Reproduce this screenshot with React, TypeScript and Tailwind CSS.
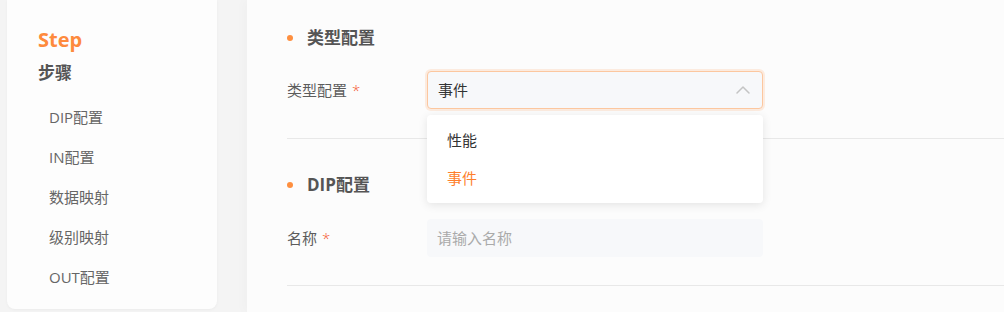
import { ChevronUp } from "lucide-react";

const steps = ["DIP配置", "IN配置", "数据映射", "级别映射", "OUT配置"];

const font = { fontFamily: '"Open Sans", "Noto Sans CJK SC", sans-serif' };

function SectionTitle({ title }: { title: string }) {
  return (
    <div className="flex h-6 items-center gap-[14px]">
      <span className="size-[6px] rounded-full bg-[#fe8f3f]" />
      <h2 className="text-[17px] font-bold text-[#555]">{title}</h2>
    </div>
  );
}

function Label({ text }: { text: string }) {
  return (
    <div className="flex w-[140px] shrink-0 items-center gap-[5px] text-[15px] text-[#5c5c5c]">
      <span>{text}</span>
      <span className="font-light text-[#f5582f]">*</span>
    </div>
  );
}

export default function App() {
  return (
    <div className="flex h-[312px] w-[1004px] overflow-hidden bg-[#f4f4f4]" style={font}>
      <aside className="ml-[7px] h-[309px] w-[210px] shrink-0 rounded-b-lg bg-[#fdfdfd] pl-[31px] pt-[26px] shadow-[0_1px_3px_rgba(0,0,0,0.04)]">
        <p className="text-[20px] font-bold leading-7 text-[#fe8a3d]">Step</p>
        <p className="mt-[7px] text-[17px] font-bold leading-6 text-[#555]">步骤</p>
        <ul className="mt-3 pl-[11px] text-[15px] text-[#666]">
          {steps.map((s) => (
            <li key={s} className="flex h-10 items-center">
              {s}
            </li>
          ))}
        </ul>
      </aside>

      <main className="ml-[30px] flex-1 bg-[#fcfcfc] pl-10 shadow-[-4px_0_10px_rgba(0,0,0,0.02)]">
        <section className="border-b border-[#e8e8e8] pb-[29px] pt-[26px]">
          <SectionTitle title="类型配置" />
          <div className="mt-[21px] flex items-center">
            <Label text="类型配置" />
            <div className="relative">
              <div className="flex h-[38px] w-[336px] items-center justify-between rounded border border-[#fcc79f] bg-[#f7f8fa] pl-[10px] pr-[7px] text-[15px] text-[#333] shadow-[0_0_0_2px_rgba(254,143,63,0.15)]">
                <span>事件</span>
                <ChevronUp className="size-6 text-[#c4c4c4]" strokeWidth={1.5} />
              </div>
              <ul className="absolute left-0 top-[44px] z-10 w-[336px] rounded bg-white py-[6px] text-[15px] shadow-[0_2px_10px_rgba(0,0,0,0.1)]">
                <li className="flex h-[38px] items-center pl-5 text-[#333]">性能</li>
                <li className="flex h-[38px] items-center pl-5 text-[#fe7f2d]">事件</li>
              </ul>
            </div>
          </div>
        </section>

        <section className="border-b border-[#e8e8e8] pb-[28px] pt-[34px]">
          <SectionTitle title="DIP配置" />
          <div className="mt-[22px] flex items-center">
            <Label text="名称" />
            <input
              placeholder="请输入名称"
              className="h-[38px] w-[336px] rounded bg-[#f7f8fa] pl-[10px] text-[15px] text-[#333] outline-none placeholder:text-[#aaa]"
            />
          </div>
        </section>
      </main>
    </div>
  );
}
